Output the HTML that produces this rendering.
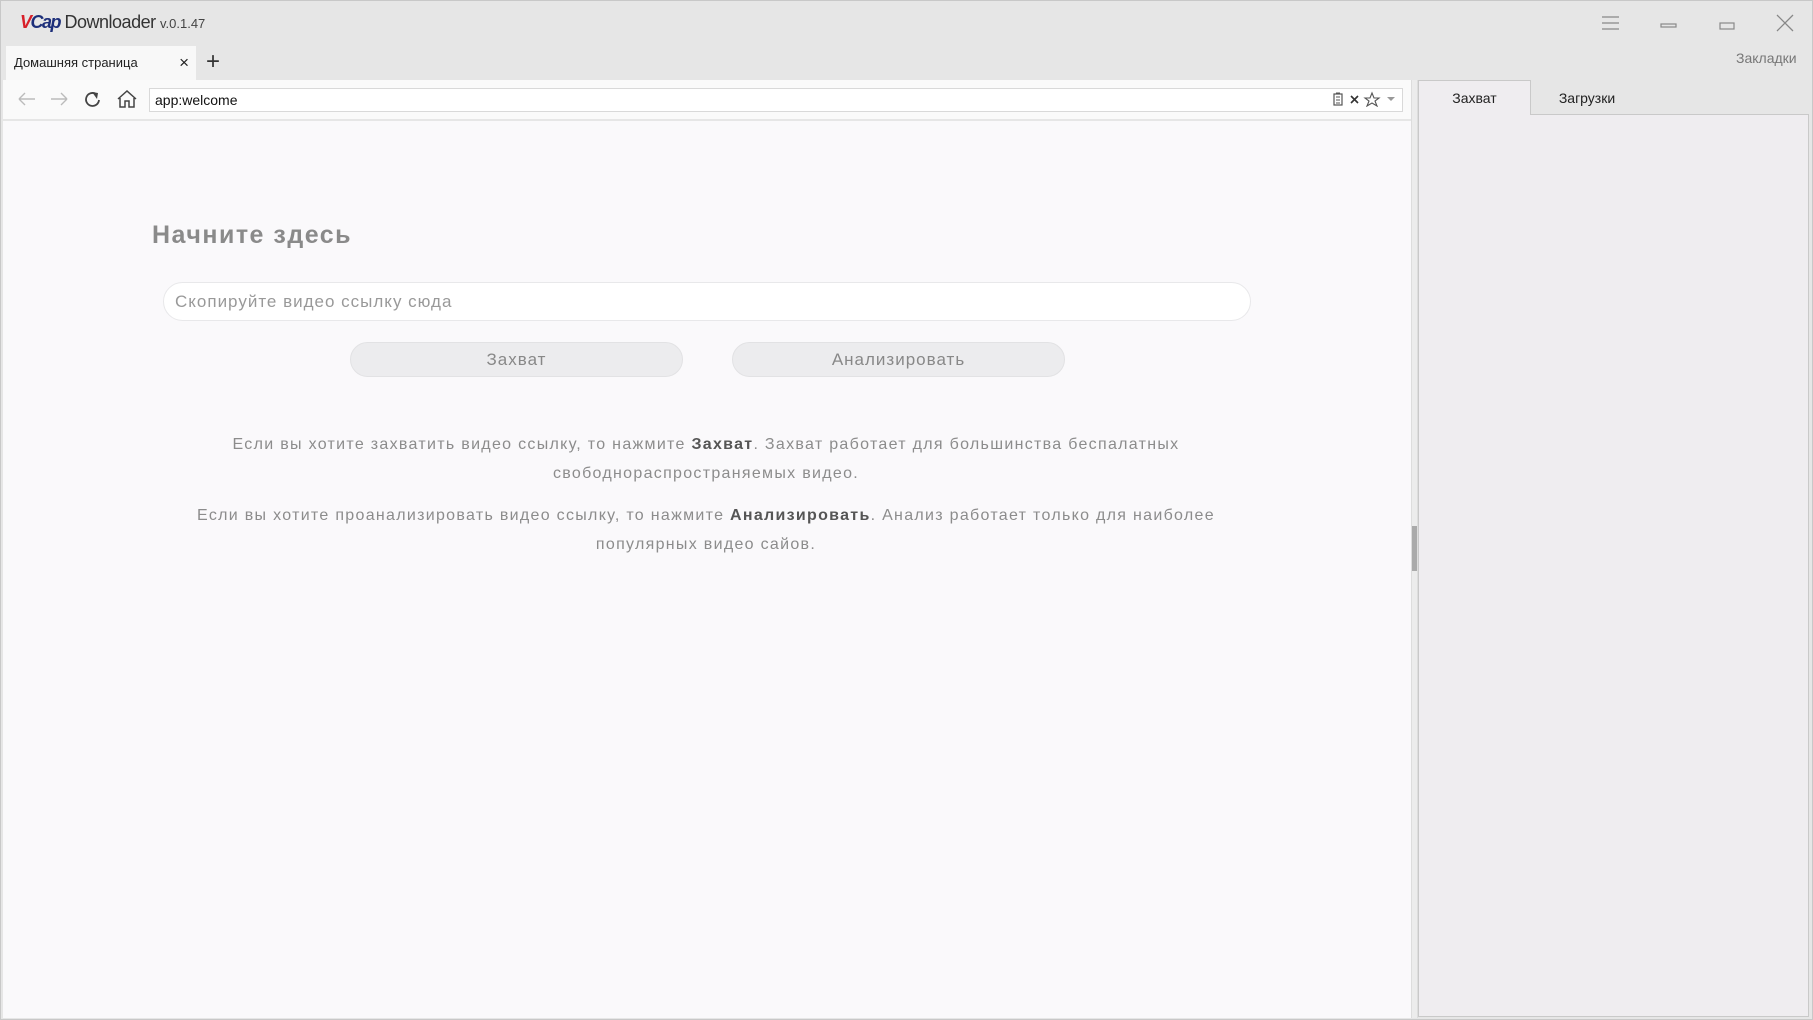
<!DOCTYPE html>
<html><head><meta charset="utf-8"><style>
*{margin:0;padding:0;box-sizing:border-box}
body{width:1813px;height:1020px;background:#e6e6e6;font-family:"Liberation Sans","DejaVu Sans",sans-serif;position:relative;overflow:hidden;border:1px solid #c8c8c8}
.abs{position:absolute}
.logo{left:19px;top:11px;font-size:18px;color:#333;letter-spacing:-0.5px}
.logo b{color:#d8202a;font-style:italic;letter-spacing:-1.5px}
.logo b span{color:#1d2f7a}
.ver{left:159px;top:15px;font-size:13px;color:#444}
.tab{left:5px;top:45px;width:190px;height:34px;background:#f8f8f8;font-size:13px;color:#222;padding:9px 0 0 8px}
.tab .x{position:absolute;right:7px;top:7px;font-size:17px}
.plus{left:205px;top:47px;font-size:24px;color:#333}
.nav{left:2px;top:79px;width:1408px;height:40px;background:#fafafa;border-bottom:1px solid #e6e6e6}
.addr{left:148px;top:87px;width:1254px;height:24px;background:#fff;border:1px solid #d9d9d9;font-size:14px;color:#111;padding:3px 5px}
.content{left:2px;top:120px;width:1408px;height:897px;background:#faf9fb}
.split{left:1410px;top:79px;width:7px;height:938px;background:#ececec;border-left:1px solid #ddd;border-right:1px solid #ddd}
.grip{left:1411px;top:525px;width:5px;height:45px;background:#aaa}
.rp{left:1417px;top:113px;width:391px;height:903px;background:#efedf0;border:1px solid #c9c9c9}
.rt1{left:1417px;top:79px;width:113px;height:35px;background:#efedf0;border:1px solid #c9c9c9;border-bottom:none;font-size:14px;color:#222;text-align:center;padding-top:9px}
.rt2{left:1530px;top:79px;width:112px;height:34px;font-size:14px;color:#222;text-align:center;padding-top:10px}
.bm{left:1735px;top:49px;font-size:14px;color:#777}
h1{position:absolute;left:151px;top:220px;font-size:25px;color:#8a8a8a;font-weight:bold;letter-spacing:1.5px}
.inp{left:162px;top:281px;width:1088px;height:39px;background:#fff;border:1px solid #e8e8ea;border-radius:20px;font-size:17px;color:#999;padding:9px 11px;letter-spacing:1px}
.btn{top:341px;width:333px;height:35px;background:#ececee;border:1px solid #e2e2e4;border-radius:18px;text-align:center;font-size:17px;color:#888;padding-top:7px;letter-spacing:1px}
.p{left:170px;width:1070px;text-align:center;font-size:16px;color:#8c8c8c;letter-spacing:1.3px;line-height:29px}
.p b{color:#555}
</style></head><body>
<div class="abs logo"><b>V<span>Cap</span></b> Downloader</div>
<div class="abs ver">v.0.1.47</div>
<svg class="abs" style="left:1600px;top:14px" width="20" height="16"><path d="M1 2H18M1 8H18M1 14H18" stroke="#888" stroke-width="1.3"/></svg>
<svg class="abs" style="left:1659px;top:22px" width="18" height="6"><rect x="1" y="1" width="15" height="3" fill="none" stroke="#888" stroke-width="1.2"/></svg>
<svg class="abs" style="left:1718px;top:20px" width="18" height="10"><rect x="1" y="2" width="14" height="6" fill="none" stroke="#888" stroke-width="1.2"/></svg>
<svg class="abs" style="left:1774px;top:12px" width="20" height="20"><path d="M2 2L18 18M18 2L2 18" stroke="#888" stroke-width="1.3"/></svg>
<div class="abs bm">Закладки</div>
<div class="abs tab">Домашняя страница<span class="x">×</span></div>
<div class="abs plus">+</div>
<div class="abs nav"></div>
<svg class="abs" style="left:14px;top:89px" width="150" height="20">
<path d="M4 9H20M4 9L10 3M4 9L10 15" stroke="#bbb" stroke-width="1.4" fill="none"/>
<path d="M36 9H52M52 9L46 3M52 9L46 15" stroke="#bbb" stroke-width="1.4" fill="none"/>
<path d="M81 4A6.5 6.5 0 1 0 84 10" stroke="#444" stroke-width="1.8" fill="none"/><path d="M77 2L83 3L82 9Z" fill="#444"/>
<path d="M103 9L112 1L121 9M105 8V17H110V11H114V17H119V8" stroke="#444" stroke-width="1.5" fill="none"/>
</svg>
<div class="abs addr">app:welcome</div>
<svg class="abs" style="left:1331px;top:90px" width="70" height="16">
<rect x="2" y="3" width="8" height="11" fill="none" stroke="#555" stroke-width="1.2"/><path d="M4 2H8M4 6H8M4 9H8M4 12H8" stroke="#555"/>
<path d="M19 5L26 12M26 5L19 12" stroke="#333" stroke-width="1.6"/>
<path d="M40 2L42 7L47 7L43 10L45 15L40 12L35 15L37 10L33 7L38 7Z" fill="none" stroke="#555" stroke-width="1.1"/>
<path d="M55 6H63L59 10Z" fill="#999"/>
</svg>
<div class="abs content"></div>
<div class="abs split"></div><div class="abs grip"></div>
<div class="abs rp"></div>
<div class="abs rt1">Захват</div>
<div class="abs rt2">Загрузки</div>
<h1>Начните здесь</h1>
<div class="abs inp">Скопируйте видео ссылку сюда</div>
<div class="abs btn" style="left:349px">Захват</div>
<div class="abs btn" style="left:731px">Анализировать</div>
<div class="abs p" style="top:429px">Если вы хотите захватить видео ссылку, то нажмите <b>Захват</b>. Захват работает для большинства беспалатных<br>свободнораспространяемых видео.</div>
<div class="abs p" style="top:500px;left:150px;width:1110px">Если вы хотите проанализировать видео ссылку, то нажмите <b>Анализировать</b>. Анализ работает только для наиболее<br>популярных видео сайов.</div>
</body></html>
